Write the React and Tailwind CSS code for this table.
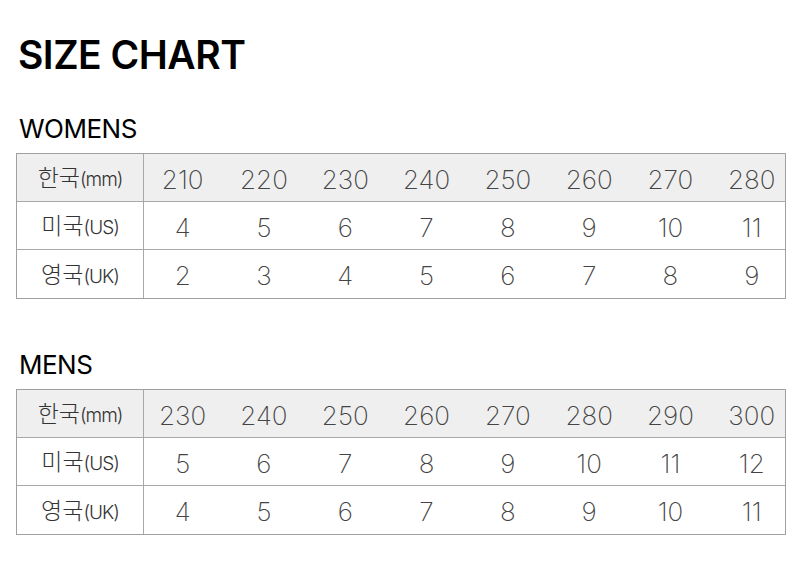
const women = {
  kr: ['210', '220', '230', '240', '250', '260', '270', '280'],
  us: ['4', '5', '6', '7', '8', '9', '10', '11'],
  uk: ['2', '3', '4', '5', '6', '7', '8', '9'],
}

const men = {
  kr: ['230', '240', '250', '260', '270', '280', '290', '300'],
  us: ['5', '6', '7', '8', '9', '10', '11', '12'],
  uk: ['4', '5', '6', '7', '8', '9', '10', '11'],
}

function Label({ ko, en }) {
  return (
    <span className="text-[#333] font-light">
      <span className="text-[23px]">{ko}</span>
      <span className="text-[19px] tracking-[-1px]">{en}</span>
    </span>
  )
}

function Row({ head, cells, shaded, last }) {
  return (
    <div className={`grid grid-cols-[127px_repeat(8,81.3px)] h-[48px] ${shaded ? 'bg-[#efefef]' : ''} ${last ? '' : 'border-b border-[#a8a8a8]'}`}>
      <div className="flex items-center justify-center border-r border-[#a8a8a8] pt-[2px]">{head}</div>
      {cells.map((c, i) => (
        <div key={i} className="flex items-center justify-center pt-[3px] pr-[4px] text-[26px] font-extralight text-[#444]">
          {c}
        </div>
      ))}
    </div>
  )
}

function SizeTable({ data }) {
  return (
    <div className="border border-[#a0a0a0] w-[770px] overflow-hidden">
      <Row head={<Label ko="한국" en="(mm)" />} cells={data.kr} shaded />
      <Row head={<Label ko="미국" en="(US)" />} cells={data.us} />
      <Row head={<Label ko="영국" en="(UK)" />} cells={data.uk} last />
    </div>
  )
}

export default function App() {
  return (
    <div
      className="bg-white w-[800px] h-[578px] pl-[16px] pt-[32px]"
      style={{ fontFamily: 'Inter, "Noto Sans CJK KR", sans-serif' }}
    >
      <h1 className="text-[39px] font-semibold text-black leading-[46px] pl-[2px] tracking-[-0.5px]">SIZE CHART</h1>

      <h2 className="mt-[36px] text-[26px] text-black leading-[30px] pl-[3px] tracking-[-0.5px]">WOMENS</h2>
      <div className="mt-[9px]">
        <SizeTable data={women} />
      </div>

      <h2 className="mt-[51px] text-[26px] text-black leading-[30px] pl-[3px] tracking-[-0.5px]">MENS</h2>
      <div className="mt-[9px]">
        <SizeTable data={men} />
      </div>
    </div>
  )
}
